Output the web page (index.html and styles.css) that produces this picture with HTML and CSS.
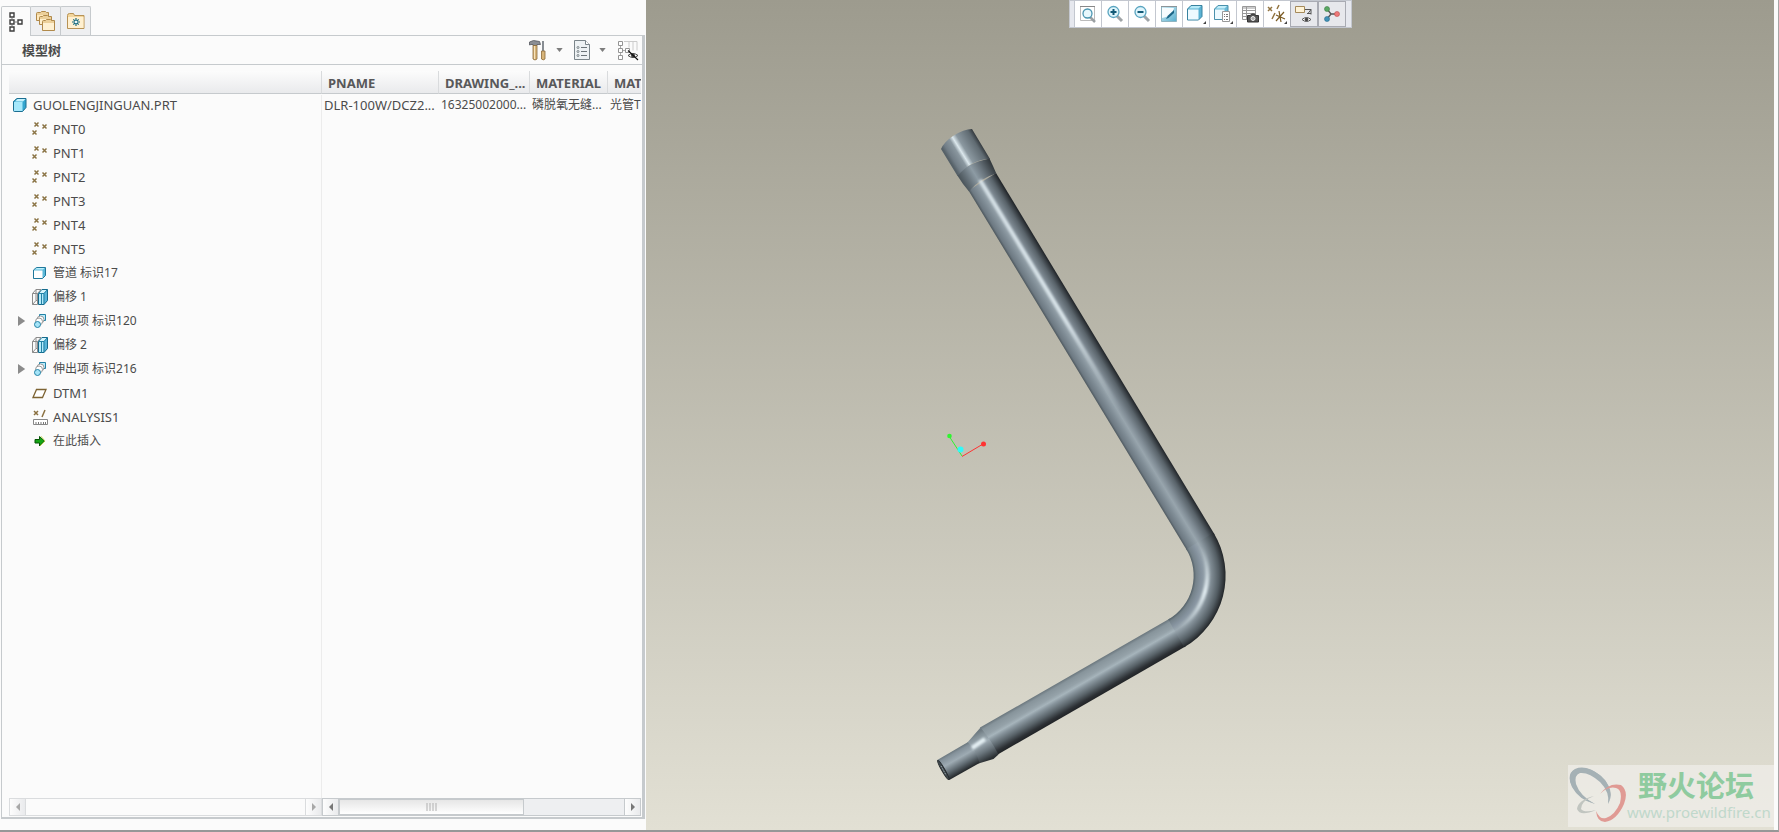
FILE: index.html
```html
<!DOCTYPE html>
<html lang="zh-CN">
<head>
<meta charset="utf-8">
<meta name="viewport" content="width=device-width, initial-scale=1">
<title>模型树</title>
<link rel="stylesheet" href="styles.css">
</head>
<body>
<svg class="defs" aria-hidden="true">
  <symbol id="i-point" viewBox="0 0 16 16"><path d="M2.500 1.500l4 4M6.500 1.500l-4 4M10.500 3.500l4 4M14.500 3.500l-4 4M.5 9.500l4 4M4.500 9.500l-4 4" stroke="#8a7344" stroke-width="1.500" fill="none"/></symbol>
  <symbol id="i-offset" viewBox="0 0 16 16"><path d="M.5 4.500h5v11h-5zM.5 4.500L4 .5h5L5.500 4.500M4 .5v11L.5 15.500M4 11.500h3" fill="none" stroke="#8b8b8b"/><path d="M6.500 4.500L10 .5h5.500v11L12 15.500H6.500z" fill="#58b4d8" stroke="#156a8c"/><path d="M7 5h4.500v10H7z" fill="#b5eafa"/><path d="M7.500 4L10 1h4.500L12 4z" fill="#d4f4fc"/><path d="M12 4.500v11M6.500 4.500H12L15.500 .5M9.500 4.500v11" stroke="#2382a6" fill="none"/></symbol>
  <symbol id="i-extrude" viewBox="0 0 16 16"><path d="M7.500 1.500h6v6h-6z" fill="#bcecfa" stroke="#2382a6"/><circle cx="8.500" cy="6.500" r="3.500" fill="#fff" stroke="#9a9a9a"/><circle cx="7" cy="8.500" r="3.500" fill="#fff" stroke="#9a9a9a"/><circle cx="5.500" cy="11.500" r="3" fill="#a5e4f8" stroke="#2382a6"/></symbol>
  <symbol id="i-caret" viewBox="0 0 8 5"><path d="M0 0h8L4 5z" fill="#7d7d7d"/></symbol>
  <symbol id="i-left" viewBox="0 0 4 8"><path d="M4 0v8L0 4z" fill="currentColor"/></symbol>
  <symbol id="i-right" viewBox="0 0 4 8"><path d="M0 0v8l4-4z" fill="currentColor"/></symbol>
</svg>

<div class="app">
  <aside class="side">
    <nav class="tabs" role="tablist">
      <button class="tab tab-active" role="tab" aria-selected="true" aria-label="模型树">
        <svg width="14" height="20" viewBox="0 0 14 20"><path d="M1 1h4v4H1zM1 8h4v4H1zM1 15h4v4H1zM9 8h4v4H9z" fill="#fff" stroke="#3d3d3d" stroke-width="1.400"/><path d="M3 6v1.500M3 13v1.500M6 10h2.500" stroke="#777"/></svg>
      </button>
      <button class="tab" role="tab" aria-label="文件夹浏览器">
        <svg width="20" height="20" viewBox="0 0 20 20"><g stroke="#b18a4b"><path d="M.5 2.500q0-1 1-1h3l1-1h4l1 1h2v8H.5z" fill="#ecd09a"/><path d="M1 4h11v5H1z" fill="#ffe9bd" stroke="none"/><path d="M3.500 6.500q0-1 1-1h2l1-1h4l1 1h3v8h-12z" fill="#ecd09a"/><path d="M4 8h11v5H4z" fill="#fff0cc" stroke="none"/><path d="M6.500 10.500q0-1 1-1h2l1-1h4l1 1h3v10h-12z" fill="#ecd09a"/><path d="M7 12h11v7H7z" fill="#fff1d2" stroke="none"/></g></svg>
      </button>
      <button class="tab" role="tab" aria-label="收藏夹">
        <svg width="18" height="16" viewBox="0 0 18 16"><path d="M.5 2.500q0-2 2-2h4l1 2h9.500v13H.5z" fill="#f3d69c" stroke="#b79255"/><path d="M1 4h15.500v11H1z" fill="#fff0d0"/><path d="M9 5v8M5 9h8M6.300 6.300l5.400 5.400M11.700 6.300l-5.400 5.400" stroke="#156a80" stroke-width="1.200"/><circle cx="9" cy="9" r="1.300" fill="#e9f7fa"/></svg>
      </button>
    </nav>

    <section class="panel">
      <header class="panel-head">
        <h1 class="panel-title">模型树</h1>
        <div class="tools">
          <button class="tool tool-drop" aria-label="设置">
            <svg width="18" height="21" viewBox="0 0 18 21"><path d="M.5 5V2l4-1.500 6 1 1 3H8v1H4v-1H2z" fill="#8b8e94" stroke="#55585e" stroke-width=".8"/><path d="M4 5.500h4v13.500q-2 2-4 0z" fill="#d8b57a" stroke="#8b6b3a" stroke-width=".8"/><path d="M5.500 6v13" stroke="#f6e3bd"/><path d="M14 1v10" stroke="#7b8087" stroke-width="1.800"/><path d="M12.500 11h3.500v8q-1.800 1.800-3.500 0z" fill="#d8b57a" stroke="#8b6b3a" stroke-width=".8"/></svg>
            <svg width="7" height="4"><use href="#i-caret"/></svg>
          </button>
          <button class="tool tool-drop" aria-label="显示">
            <svg width="16" height="20" viewBox="0 0 16 20"><path d="M.5.5h11l4 4v15H.5z" fill="#eef2f4" stroke="#7b858a"/><path d="M11.500.5v4h4" fill="#fff" stroke="#7b858a"/><path d="M7 7.500h6M7 11.500h6M7 15.500h6" stroke="#6c7479"/><g fill="none" stroke="#7b858a"><circle cx="4" cy="7.500" r="1"/><circle cx="4" cy="11.500" r="1"/><circle cx="4" cy="15.500" r="1"/></g></svg>
            <svg width="7" height="4"><use href="#i-caret"/></svg>
          </button>
          <button class="tool" aria-label="隐藏树列">
            <svg width="22" height="21" viewBox="0 0 22 21"><path d="M7 1.500h5v6M12 1.500h4v9M16 1.500h4v9" fill="none" stroke="#ccc"/><path d="M1.500 1.500h4v4h-4zM1.500 8.500h4v4h-4zM1.500 15.500h4v4h-4zM8.500 8.500h4v4h-4z" fill="#fff" stroke="#949494"/><path d="M3.500 6v2M3.500 13v2M6 10.500h2" stroke="#aaa"/><path d="M11 15.500q5-4 10 0q-5 4-10 0z" fill="#fff" stroke="#444"/><circle cx="16" cy="15.500" r="2" fill="#444"/><path d="M11 10.500l10 9.500" stroke="#111" stroke-width="1.100"/></svg>
          </button>
        </div>
      </header>

      <div class="grid-wrap">
        <div class="grid-clip">
          <table class="grid">
            <colgroup><col class="c-tree"><col class="c-name"><col class="c-draw"><col class="c-mat"><col></colgroup>
            <thead>
              <tr><th aria-label="模型"></th><th>PNAME</th><th>DRAWING_...</th><th>MATERIAL</th><th>MAT</th></tr>
            </thead>
            <tbody>
              <tr><td><div class="node node-root"><svg width="14" height="14" viewBox="0 0 14 14"><path d="M.5 4q0-1 1-1.500L4 .5h9v9l-3.500 4h-8q-1 0-1-1z" fill="#35a6cf" stroke="#1b6e91"/><path d="M1 4h8.500v9H1z" fill="#a6e8fb"/><path d="M2 3.500L4.500 1h8L10 3.500z" fill="#c5f2fd"/></svg>GUOLENGJINGUAN.PRT</div></td><td>DLR-100W/DCZ2...</td><td class="small">16325002000...</td><td class="small">磷脱氧无缝...</td><td class="small">光管T</td></tr>
              <tr><td colspan="5"><div class="node"><svg class="ico"><use href="#i-point"/></svg>PNT0</div></td></tr>
              <tr><td colspan="5"><div class="node"><svg class="ico"><use href="#i-point"/></svg>PNT1</div></td></tr>
              <tr><td colspan="5"><div class="node"><svg class="ico"><use href="#i-point"/></svg>PNT2</div></td></tr>
              <tr><td colspan="5"><div class="node"><svg class="ico"><use href="#i-point"/></svg>PNT3</div></td></tr>
              <tr><td colspan="5"><div class="node"><svg class="ico"><use href="#i-point"/></svg>PNT4</div></td></tr>
              <tr><td colspan="5"><div class="node"><svg class="ico"><use href="#i-point"/></svg>PNT5</div></td></tr>
              <tr><td colspan="5"><div class="node small"><svg class="ico" viewBox="0 0 16 16"><path d="M1.500 5L4.500 2.500h9v8l-3 3h-9z" fill="#5bb8d8" stroke="#20789b"/><path d="M2 5.500h8.500V13H2z" fill="#fff"/><path d="M2.500 4.500L5 3h7.500L11 4.500z" fill="#bdf0fc"/></svg>管道 标识17</div></td></tr>
              <tr><td colspan="5"><div class="node small"><svg class="ico"><use href="#i-offset"/></svg>偏移 1</div></td></tr>
              <tr><td colspan="5"><div class="node node-parent small"><button class="expander" aria-label="展开 标识120"></button><svg class="ico"><use href="#i-extrude"/></svg>伸出项 标识120</div></td></tr>
              <tr><td colspan="5"><div class="node small"><svg class="ico"><use href="#i-offset"/></svg>偏移 2</div></td></tr>
              <tr><td colspan="5"><div class="node node-parent small"><button class="expander" aria-label="展开 标识216"></button><svg class="ico"><use href="#i-extrude"/></svg>伸出项 标识216</div></td></tr>
              <tr><td colspan="5"><div class="node"><svg class="ico" viewBox="0 0 16 16"><path d="M1 12.500L4.500 4.500H14l-3.500 8z" fill="#fff" stroke="#7d6333" stroke-width="1.300"/></svg>DTM1</div></td></tr>
              <tr><td colspan="5"><div class="node"><svg class="ico" viewBox="0 0 16 16"><path d="M2 2l4 4M6 2L2 6M13 1l-3 7" stroke="#8a7040" stroke-width="1.500"/><path d="M1.500 10.500h14v5h-14z" fill="#fff" stroke="#888"/><path d="M4 13v2M6.500 13v2M9 13v2M11.500 13v2M13.500 13v2" stroke="#777"/></svg>ANALYSIS1</div></td></tr>
              <tr><td colspan="5"><div class="node small"><svg class="ico" viewBox="0 0 16 16"><path d="M3 6.500h4.500V3.500L12.500 8l-5 5V10H3z" fill="#14a514" stroke="#055505"/><path d="M9 3l4 5-5 5" fill="none" stroke="#c9d92a" stroke-width=".6"/></svg>在此插入</div></td></tr>
            </tbody>
          </table>
        </div>
        <div class="scrollers">
          <div class="scroll scroll-off">
            <button class="sbtn" aria-label="树向左滚动" disabled><svg width="4" height="8"><use href="#i-left"/></svg></button>
            <div class="track"></div>
            <button class="sbtn sbtn-end" aria-label="树向右滚动" disabled><svg width="4" height="8"><use href="#i-right"/></svg></button>
          </div>
          <div class="scroll">
            <button class="sbtn" aria-label="列向左滚动"><svg width="4" height="8"><use href="#i-left"/></svg></button>
            <div class="track"><div class="thumb"><svg width="12" height="8" viewBox="0 0 12 8"><path d="M1 0v8M4 0v8M7 0v8M10 0v8" stroke="#b0b0b0"/></svg></div></div>
            <button class="sbtn sbtn-end" aria-label="列向右滚动"><svg width="4" height="8"><use href="#i-right"/></svg></button>
          </div>
        </div>
      </div>
    </section>
  </aside>

  <main class="canvas">
    <svg class="scene" viewBox="646 0 1128 830" preserveAspectRatio="xMidYMid slice" role="img" aria-label="弯管模型">
      <defs>
        <linearGradient id="up" gradientUnits="userSpaceOnUse" x1="968.300" y1="190" x2="995.700" y2="173.400"><stop offset="0" stop-color="#4d575d"/><stop offset=".08" stop-color="#6d7982"/><stop offset=".25" stop-color="#818e97"/><stop offset=".42" stop-color="#98a5ad"/><stop offset=".58" stop-color="#7f8b94"/><stop offset=".8" stop-color="#59636a"/><stop offset=".94" stop-color="#343a3f"/><stop offset="1" stop-color="#22262a"/></linearGradient>
        <linearGradient id="cap" gradientUnits="userSpaceOnUse" x1="942" y1="148" x2="973" y2="129"><stop offset="0" stop-color="#566168"/><stop offset=".1" stop-color="#717d86"/><stop offset=".3" stop-color="#8a979f"/><stop offset=".4" stop-color="#dce8ed"/><stop offset=".52" stop-color="#8b98a0"/><stop offset=".85" stop-color="#606b72"/><stop offset="1" stop-color="#2b3034"/></linearGradient>
        <linearGradient id="cone" gradientUnits="userSpaceOnUse" x1="963" y1="183" x2="993" y2="165"><stop offset="0" stop-color="#4c565c"/><stop offset=".2" stop-color="#69757d"/><stop offset=".42" stop-color="#8d9ba4"/><stop offset=".65" stop-color="#6b767e"/><stop offset="1" stop-color="#30363a"/></linearGradient>
        <radialGradient id="bend" gradientUnits="userSpaceOnUse" cx="1143" cy="575.600" r="82.600"><stop offset=".612" stop-color="#536067"/><stop offset=".643" stop-color="#75828a"/><stop offset=".71" stop-color="#8794a0"/><stop offset=".772" stop-color="#9ca9b1"/><stop offset=".835" stop-color="#7c8890"/><stop offset=".92" stop-color="#535d63"/><stop offset=".976" stop-color="#303539"/><stop offset="1" stop-color="#202427"/></radialGradient>
        <linearGradient id="low" gradientUnits="userSpaceOnUse" x1="1168.200" y1="619.500" x2="1184.100" y2="647.200"><stop offset="0" stop-color="#6a767d"/><stop offset=".1" stop-color="#87949b"/><stop offset=".3" stop-color="#95a2a9"/><stop offset=".4" stop-color="#a6b4bb"/><stop offset=".5" stop-color="#89969e"/><stop offset=".72" stop-color="#596369"/><stop offset=".9" stop-color="#2d3135"/><stop offset="1" stop-color="#212427"/></linearGradient>
        <linearGradient id="tip" gradientUnits="userSpaceOnUse" x1="967.700" y1="742.300" x2="979.300" y2="762.700"><stop offset="0" stop-color="#6a767d"/><stop offset=".12" stop-color="#84919a"/><stop offset=".4" stop-color="#9eabb3"/><stop offset=".7" stop-color="#626d74"/><stop offset="1" stop-color="#24282b"/></linearGradient>
        <linearGradient id="taper" gradientUnits="userSpaceOnUse" x1="974" y1="734" x2="988" y2="760"><stop offset="0" stop-color="#6f7b82"/><stop offset=".15" stop-color="#87949b"/><stop offset=".4" stop-color="#a0adb5"/><stop offset=".7" stop-color="#69747b"/><stop offset="1" stop-color="#2b3033"/></linearGradient>
        <linearGradient id="shineA" gradientUnits="userSpaceOnUse" x1="980" y1="180" x2="1120" y2="410"><stop offset="0" stop-color="#e0ebf0" stop-opacity=".85"/><stop offset=".6" stop-color="#e0ebf0" stop-opacity=".9"/><stop offset="1" stop-color="#d0dce2" stop-opacity="0"/></linearGradient>
        <linearGradient id="shineB" gradientUnits="userSpaceOnUse" x1="1205" y1="548" x2="1180" y2="628"><stop offset="0" stop-color="#e0ebf0" stop-opacity="0"/><stop offset=".5" stop-color="#e0ebf0"/><stop offset="1" stop-color="#e0ebf0" stop-opacity="0"/></linearGradient>
        <filter id="soft" filterUnits="userSpaceOnUse" x="930" y="110" width="330" height="680"><feGaussianBlur stdDeviation="1.300"/></filter>
      </defs>
      <path d="M968.500 190.500L996 173L1214.600 534.400L1187.300 551z" fill="url(#up)"/>
      <path d="M957 175Q965 164 989.500 158.500L993 166L996.300 173.500Q980 178 969 191.500L963 184z" fill="url(#cone)"/>
      <path d="M941 149Q944 142 953 136Q964 129 972 129L990 159Q972 159 957.500 176z" fill="url(#cap)"/>
      <path d="M980 727.600L1169.900 618.500L1185.800 646.200L998.600 754L990 756z" fill="url(#low)"/>
      <path d="M1186.300 549.300A50.600 50.600 0 0 1 1168.200 619.500L1184.100 647.200A82.600 82.600 0 0 0 1213.600 532.700z" fill="url(#bend)"/>
      <path d="M980.500 727.500L967 743Q974 750 978.500 763.500L993.500 759L998.500 754.500Q991 740 980.500 727.500z" fill="url(#taper)"/>
      <path d="M937.300 760L967.700 742.300Q976 750 979.500 763L949.300 780z" fill="url(#tip)"/>
      <path d="M972 748L985 739" stroke="#e4eff3" stroke-width="4" filter="url(#soft)"/>
      <ellipse cx="943.300" cy="770" rx="1.500" ry="11" transform="rotate(-30 943.300 770)" fill="#414a4f" stroke="#252a2d"/>
      <path d="M941 766l5 9" stroke="#a9b6bd" stroke-dasharray="1 1"/>
      <path d="M980 180L1120 410" stroke="url(#shineA)" stroke-width="4" filter="url(#soft)"/>
      <path d="M1200 545A64 64 0 0 1 1177 629" fill="none" stroke="url(#shineB)" stroke-width="4" filter="url(#soft)"/>
      <path d="M949 436L962 456" stroke="#2ff52f"/><path d="M962 456.500L983 444" stroke="#ff3232"/>
      <circle cx="949.500" cy="436" r="2.300" fill="#2ff52f"/><circle cx="983.500" cy="444" r="2.500" fill="#ff3232"/><circle cx="960.500" cy="449.500" r="3" fill="#2ffafa"/>
    </svg>

    <div class="toolbar" role="toolbar" aria-label="视图">
      <button class="tb" aria-label="重新调整"><svg width="18" height="18" viewBox="0 0 18 18"><path d="M1.500 1.500h14v14h-14z" fill="#fff" stroke="#bbb"/><path d="M1 1.500h15" stroke="#888"/><path d="M11 12l5 5" stroke="#9a9fa2" stroke-width="2.500"/><circle cx="8.500" cy="8.500" r="4.500" fill="#e8f8fd" stroke="#4a95b0" stroke-width="1.300"/></svg></button>
      <button class="tb" aria-label="放大"><svg width="18" height="18" viewBox="0 0 18 18"><path d="M11 11l5 5" stroke="#9fa4a7" stroke-width="3"/><circle cx="7.500" cy="7" r="5.500" fill="#dff5fc" stroke="#5aa5c0" stroke-width="1.300"/><path d="M4.500 7h6M7.500 4v6" stroke="#125a77" stroke-width="2"/></svg></button>
      <button class="tb" aria-label="缩小"><svg width="18" height="18" viewBox="0 0 18 18"><path d="M11 11l5 5" stroke="#9fa4a7" stroke-width="3"/><circle cx="7.500" cy="7" r="5.500" fill="#dff5fc" stroke="#5aa5c0" stroke-width="1.300"/><path d="M4.500 7h6" stroke="#125a77" stroke-width="2"/></svg></button>
      <button class="tb" aria-label="重画"><svg width="18" height="18" viewBox="0 0 18 18"><defs><linearGradient id="wash" x1="0" y1="0" x2="1" y2="1"><stop offset="0" stop-color="#d5eef6"/><stop offset="1" stop-color="#56aecd"/></linearGradient></defs><path d="M1.500 1.500h15v15h-15z" fill="url(#wash)" stroke="#8fb4c1"/><path d="M2 3h12Q13 11 2 13z" fill="#f6fcfe"/><path d="M6 14l2-3.500L14 5v3l-5.500 5z" fill="#1c6686"/><path d="M1 1.500h16" stroke="#8c9498"/></svg></button>
      <button class="tb" aria-label="显示样式"><svg width="20" height="20" viewBox="0 0 20 20"><path d="M1.500 5L5 1.500h11v11L12.500 16h-11z" fill="#5ab2d3" stroke="#38829f"/><path d="M2 5.500h10.500v10H2z" fill="#eefaff"/><path d="M3 4.500L5.500 2h9.500l-2.500 2.500z" fill="#b5eaf8"/><path d="M20 17v3h-3z" fill="#444"/></svg></button>
      <button class="tb" aria-label="已命名视图"><svg width="20" height="20" viewBox="0 0 20 20"><path d="M1.500 5L5 1.500h10v11L12 15.500H1.500z" fill="#6abbd8" stroke="#4a91ac"/><path d="M2 5.500h9.500V15H2z" fill="#eefaff"/><path d="M3 4.500L5.500 2h8.500l-2.500 2.500z" fill="#c2eefa"/><path d="M9.500 7.500h7v10h-7z" fill="#fff" stroke="#999"/><path d="M11 10.500h1M13 10.500h2M11 12.500h1M13 12.500h2M11 15.500h1M13 15.500h2" stroke="#777"/><path d="M20 17v3h-3z" fill="#444"/></svg></button>
      <button class="tb" aria-label="视图管理器"><svg width="18" height="18" viewBox="0 0 18 18"><path d="M1.500 1.500h13v13h-13z" fill="#fff" stroke="#999"/><path d="M2 2h12v2H2z" fill="#ccc"/><path d="M1.500 5.500h13M1.500 8.500h13M1.500 11.500h13M5.500 2v12" stroke="#999"/><path d="M6.500 10.500h3l1-1.500h3l1 1.500h3v6.500h-11z" fill="#555" stroke="#333"/><circle cx="12" cy="13.500" r="2" fill="#aaa" stroke="#eee"/></svg></button>
      <button class="tb" aria-label="基准显示"><svg width="20" height="20" viewBox="0 0 20 20"><path d="M1 3l4 4M5 3L1 7M12 1l-2 4M8 9l-3 6" stroke="#927441" stroke-width="1.500"/><path d="M12 7l2 11M9 11l9 4M17 8l-8 9" stroke="#7b5b23" stroke-width="1.200"/><path d="M20 17v3h-3z" fill="#444"/></svg></button>
      <button class="tb tb-on" aria-pressed="true" aria-label="注释显示"><svg width="20" height="20" viewBox="0 0 20 20"><path d="M1.500 2.500h9v6h-9z" fill="#fff3d6" stroke="#a58a5b"/><path d="M11 5.500h6l-3 4M17 5.500v5M13 9.500h4" stroke="#555" fill="none"/><path d="M8 15.500q4.500-4 9 0q-4.500 4-9 0z" fill="#fff" stroke="#555"/><circle cx="12.500" cy="15.500" r="1.800" fill="#444"/></svg></button>
      <button class="tb tb-on" aria-pressed="true" aria-label="旋转中心"><svg width="18" height="18" viewBox="0 0 18 18"><path d="M4 4l4 5h6M8 9l-4 5" fill="none" stroke="#555" stroke-width="1.300"/><circle cx="4" cy="4" r="2.500" fill="#5aa964" stroke="#3c7c45" stroke-width=".6"/><circle cx="14" cy="9" r="2.500" fill="#ee7878" stroke="#b94d4d" stroke-width=".6"/><circle cx="4" cy="14" r="2.500" fill="#4292b8" stroke="#286b8c" stroke-width=".6"/></svg></button>
    </div>

    <div class="mark">
      <svg class="mark-logo" width="58" height="58" viewBox="0 0 58 58"><path fill-rule="evenodd" fill="#a5b1b5" d="M39 37Q45 24 31 12Q17 1 6 4Q-1 9 6 21Q13 31 26 37Q10 33 3 20Q-3 7 6 2Q17-3 32 9Q47 24 39 37z"/><path fill="#a5b1b5" d="M26 37Q6 30 1 14Q0 2 12 1Q25 1 36 13Q45 26 39 37Q41 25 31 15Q20 5 11 6Q5 8 7 17Q11 29 26 37z"/><path fill="#e09a94" d="M31 27Q40 15 52 18Q60 24 55 37Q48 53 36 55Q28 55 27 44Q31 53 37 51Q46 48 51 36Q54 23 47 21Q39 19 31 27z"/><path fill="#c1c5c0" d="M25 29Q9 33 8 42Q11 50 27 43Q15 46 12 42Q12 34 25 29z"/></svg>
      <div class="mark-text"><strong class="mark-name">野火论坛</strong><span class="mark-url">www.proewildfire.cn</span></div>
    </div>
  </main>
</div>
</body>
</html>
```
FILE: styles.css
```css
* { box-sizing: border-box; }

body {
  margin: 0;
  background: #fbfbfb;
  color: #4b4b4b;
  font: 13px/20px "Noto Sans", "Noto Sans CJK SC", sans-serif;
}

button {
  margin: 0;
  padding: 0;
  border: 0;
  background: none;
  font: inherit;
  color: inherit;
}

svg { display: block; flex: none; }
.defs { position: absolute; width: 0; height: 0; }

.app {
  display: grid;
  grid-template-columns: minmax(0, 646fr) minmax(0, 1128fr);
  height: 100vh;
  padding-right: 4px;
  border-right: 1px solid #a5a5a5;
  border-bottom: 2px solid #979797;
}

/* Side panel */
.side {
  display: flex;
  flex-direction: column;
  min-width: 0;
  min-height: 0;
  padding: 6px 1px 11px 1px;
}

.tabs { display: flex; height: 29px; }

.tab {
  display: flex;
  align-items: center;
  justify-content: center;
  width: 31px;
  margin-left: -1px;
  border: 1px solid #c6cacd;
  border-bottom: 0;
  border-radius: 2px 2px 0 0;
  background: #eeeff1;
}

.tab-active {
  z-index: 1;
  width: 30px;
  height: 30px;
  margin-left: 0;
  background: #fbfbfb;
}

.panel {
  display: flex;
  flex: 1;
  flex-direction: column;
  min-height: 0;
  border: 1px solid #c6cacd;
  border-right-width: 3px;
  border-bottom-width: 2px;
}

.panel-head {
  display: flex;
  align-items: center;
  justify-content: space-between;
  height: 29px;
  padding: 0 3px 0 20px;
  border-bottom: 1px solid #c6cacd;
}

.panel-title { margin: 0; font-size: 13px; line-height: 20px; }
.tools { display: flex; align-items: center; gap: 11px; }
.tool { display: flex; align-items: center; }
.tool-drop { gap: 9px; }

/* Tree table */
.grid-wrap {
  display: flex;
  flex: 1;
  flex-direction: column;
  min-height: 0;
  padding: 6px 1px 1px 7px;
}

.grid-clip {
  flex: 1;
  min-height: 0;
  overflow: hidden;
  background: linear-gradient(#ececec, #ececec) 312px 24px / 1px 100% no-repeat;
}

.grid {
  width: 100%;
  border-collapse: separate;
  border-spacing: 0;
  table-layout: fixed;
}

.c-tree { width: 313px; }
.c-name { width: 117px; }
.c-draw { width: 91px; }
.c-mat { width: 78px; }

.grid th {
  height: 23px;
  padding: 2px 0 0 6px;
  overflow: hidden;
  border-right: 1px solid #d9dbdd;
  border-bottom: 1px solid #c6cacd;
  background: linear-gradient(#fcfcfc, #e9eaec);
  color: #58585a;
  line-height: 20px;
  text-align: left;
  white-space: nowrap;
}

.grid th:last-child { border-right: 0; }

.grid td {
  height: 24px;
  padding: 0 0 2px 2px;
  overflow: hidden;
  white-space: nowrap;
}

.grid td:first-child { padding: 0; }
.grid .small { font-size: 12px; }

.node {
  display: flex;
  align-items: center;
  gap: 5px;
  height: 24px;
  padding: 0 0 2px 23px;
}

.node-root { gap: 6px; padding-left: 4px; }
.node-parent { padding-left: 9px; }
.ico { width: 16px; height: 16px; }

.expander {
  width: 9px;
  height: 10px;
  background: #8b8b8b;
  clip-path: polygon(0 0, 80% 50%, 0 100%);
}

/* Scroll bars */
.scrollers { display: grid; grid-template-columns: 313px minmax(0, 1fr); }

.scroll {
  display: flex;
  height: 18px;
  border: 1px solid #c6cacd;
  color: #777;
  background: #eeeff1;
}

.scroll-off { border-color: #dadcde; color: #a8a8a8; background: #fbfbfb; }

.sbtn {
  display: flex;
  align-items: center;
  justify-content: center;
  width: 16px;
  border-right: 1px solid #c6cacd;
  background: linear-gradient(90deg, #fdfdfd, #e9eaec);
}

.sbtn-end { border-right: 0; border-left: 1px solid #c6cacd; }
.scroll-off .sbtn { border-color: #dadcde; color: inherit; }
.track { flex: 1; min-width: 0; }

.thumb {
  display: flex;
  align-items: center;
  justify-content: center;
  width: 65%;
  height: 16px;
  border: 1px solid #c6cacd;
  background: linear-gradient(#e6e6e6, #fff);
}

/* Graphics area */
.canvas {
  position: relative;
  min-width: 0;
  min-height: 0;
  overflow: hidden;
  background: linear-gradient(#9d9b8e, #e2e0d4);
}

.scene { position: absolute; inset: 0; width: 100%; height: 100%; }

.toolbar {
  position: relative;
  display: flex;
  width: max-content;
  height: 28px;
  margin: 0 auto;
  padding: 0 5px 0 4px;
  border: 1px solid #c3c7cf;
  background: #e6e8ee;
}

.tb {
  display: flex;
  align-items: center;
  justify-content: center;
  width: 27px;
  border-left: 1px solid #c3c7cf;
  background: #fff;
}

.tb-on { width: 28px; border: 1px solid #a9abb3; background: #e7e8ec; }

.mark {
  position: absolute;
  right: 0;
  bottom: 3px;
  display: flex;
  align-items: center;
  width: 206px;
  height: 62px;
  padding-left: 1px;
  background: rgb(240 238 234 / 72%);
}

.mark-text { display: flex; flex-direction: column; }

.mark-name {
  padding-left: 11px;
  color: #8fcb9f;
  font-size: 29px;
  line-height: 32px;
}

.mark-url {
  color: #c0d8cb;
  font-size: 15px;
  line-height: 20px;
}
```
